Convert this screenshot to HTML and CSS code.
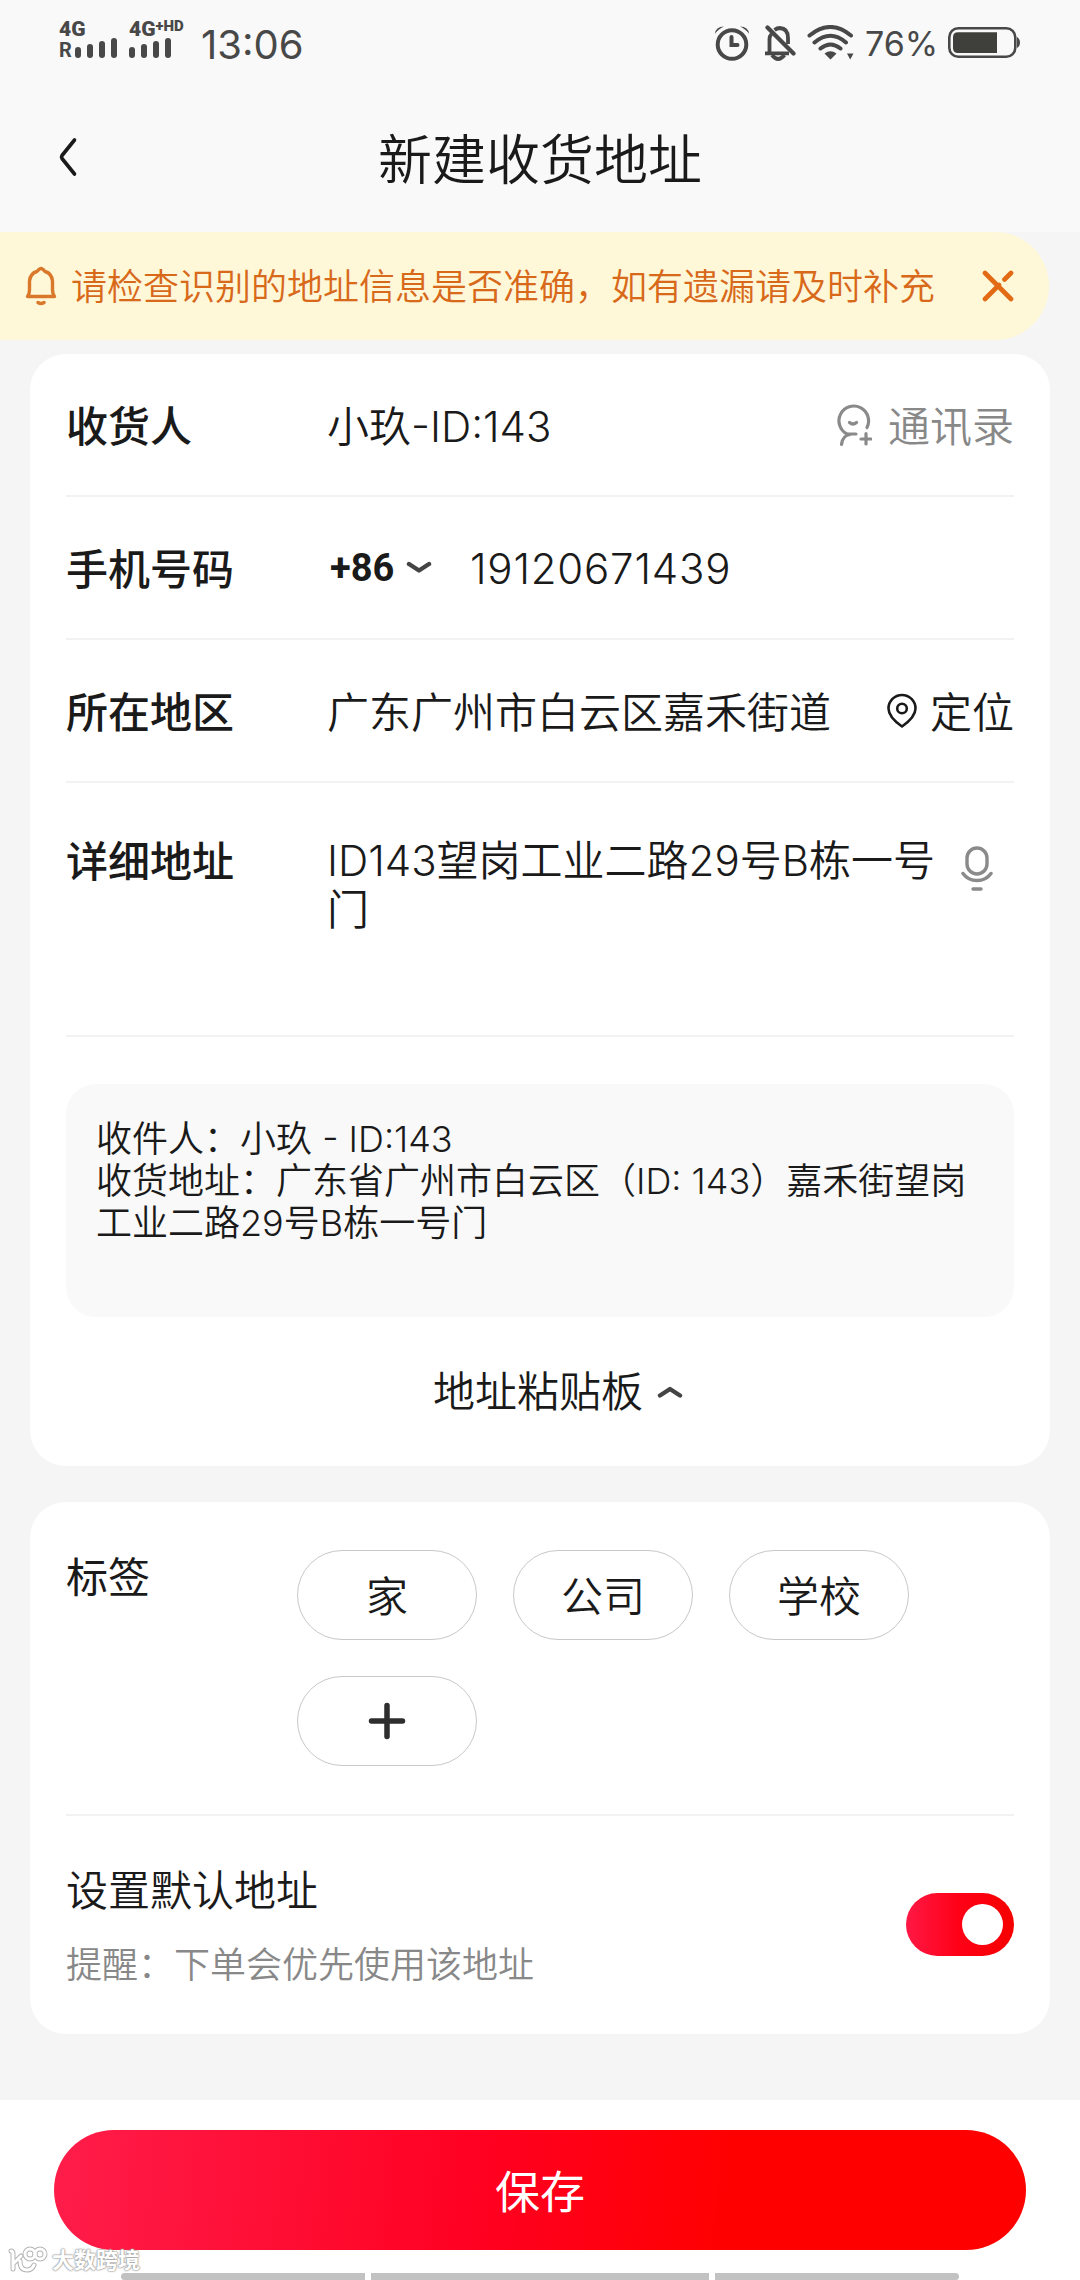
FILE: index.html
```html
<!DOCTYPE html>
<html lang="zh-CN">
<head>
    <meta charset="UTF-8">
    <meta name="viewport" content="width=device-width, initial-scale=1.0">
    <title>新建收货地址</title>
    <link rel="stylesheet" href="styles.css">
</head>
<body>
    <header class="header">
        <div class="status">
            <div class="sim">
                <div class="net">4G</div>
                <div class="signal"><span class="roam">R</span><i class="b1"></i><i class="b2"></i><i class="b3"></i><i class="b4"></i></div>
            </div>
            <div class="sim sim2">
                <div class="net">4G<sup>+HD</sup></div>
                <div class="signal"><i class="b1"></i><i class="b2"></i><i class="b3"></i><i class="b4"></i></div>
            </div>
            <span class="time">13:06</span>
            <div class="status-right">
                <svg class="ic-alarm" width="36" height="36" viewBox="0 0 36 36" fill="none" stroke="#484848" stroke-width="4" stroke-linecap="round">
                    <circle cx="18" cy="19.500" r="14.300"/>
                    <path d="M17.500 12v8h6"/>
                    <path d="M1 9Q1.500 1.500 10 1.500Q4 4 1 9ZM35 9Q34.500 1.500 26 1.500Q32 4 35 9Z" fill="#484848" stroke="none"/>
                </svg>
                <svg class="ic-mute" width="32" height="36" viewBox="0 0 32 36" fill="none" stroke="#484848" stroke-width="3.800">
                    <path d="M5.500 28V14Q5.500 11 7.500 9M10.500 5Q13 3 16 3Q24 3.500 24 13V19M1 28.300H25"/>
                    <path d="M8 30Q14 38 20.500 30"/>
                    <path d="M3.500 2.500L29.500 28.500" stroke-linecap="round" stroke-width="4.200"/>
                </svg>
                <svg class="ic-wifi" width="47" height="36" viewBox="0 0 47 36" fill="none" stroke="#484848" stroke-width="4" stroke-linecap="round">
                    <path d="M2.500 10.500Q23.500-6.500 44 10.500M7.500 17.500Q23.500 4 39 17.500M13.500 23.500Q23.500 15.500 33.500 23.500"/>
                    <path d="M17.500 28.500Q23.500 24 29.500 28.500L23.500 34.500ZM40 28.500H46.500L43.200 34.500Z" fill="#484848" stroke="none"/>
                </svg>
                <span class="percent">76%</span>
                <svg width="72" height="32" viewBox="0 0 72 32">
                    <rect x="1.300" y="1.300" width="66" height="28.400" rx="9" fill="none" stroke="#484848" stroke-width="2.600"/>
                    <path d="M10 5.200H49V26H10Q5 26 5 21V10Q5 5.200 10 5.200Z" fill="#3f3f3b"/>
                    <path d="M69 10Q72 12 72 15.500T69 21Z" fill="#484848"/>
                </svg>
            </div>
        </div>
        <div class="navbar">
            <svg class="back" width="20" height="42" viewBox="0 0 20 42" fill="none" stroke="#1a1a1a" stroke-width="3.600" stroke-linecap="round" stroke-linejoin="round"><path d="M16.500 4L4 19.500Q3 21 4 22.500L16.500 38"/></svg>
            <h1>新建收货地址</h1>
        </div>
    </header>

    <div class="notice">
        <svg class="bell" width="32" height="40" viewBox="0 0 32 40" fill="none" stroke="#d9772a" stroke-width="3.400" stroke-linecap="round" stroke-linejoin="round">
            <path d="M2.500 30.500H29.500Q27.500 28 27.500 24V15Q26.500 7 20 5.500Q17.500 2.500 16 2.500T12 5.500Q5.500 7 4.500 15V24Q4.500 28 2.500 30.500Z"/>
            <path d="M13 36.500Q16 38.500 19 36.500"/>
        </svg>
        <p>请检查识别的地址信息是否准确，如有遗漏请及时补充</p>
        <svg class="close" width="32" height="32" viewBox="0 0 32 32" fill="none" stroke="#e26a14" stroke-width="4.600" stroke-linecap="round"><path d="M3 3L29 29M3 29L17 15M22.500 9.500L29 3"/></svg>
    </div>

    <main>
        <section class="card">
            <div class="row">
                <label>收货人</label>
                <span class="value name">小玖-ID:143</span>
                <a class="action gray">
                    <svg width="36" height="44" viewBox="0 0 36 44" fill="none" stroke="#8a8a8a" stroke-width="3.200" stroke-linecap="round">
                        <path d="M31 24.500A14.800 14.800 0 1 0 11 31H20M5.500 41.500Q6.500 32.500 14 31.500"/>
                        <path d="M13.500 19.500Q17 22.500 20.500 19.500M30 30.500V41M25 36H35"/>
                    </svg>
                    通讯录
                </a>
            </div>
            <div class="row">
                <label>手机号码</label>
                <span class="area-code">+86</span>
                <svg class="down" width="26" height="14" viewBox="0 0 26 14" fill="none" stroke="#444" stroke-width="4.400" stroke-linecap="round" stroke-linejoin="round"><path d="M3 3L13 9.500L23 3"/></svg>
                <span class="phone">19120671439</span>
            </div>
            <div class="row">
                <label>所在地区</label>
                <span class="value">广东广州市白云区嘉禾街道</span>
                <a class="action locate">
                    <svg width="30" height="36" viewBox="0 0 30 36" fill="none" stroke="#1a1a1a" stroke-width="2.600" stroke-linejoin="round">
                        <path d="M15 33.500Q1.500 24 1.500 15.500A13.500 13.500 0 0 1 28.500 15.500Q28.500 24 15 33.500Z"/>
                        <circle cx="15" cy="15.500" r="4.800"/>
                    </svg>
                    定位
                </a>
            </div>
            <div class="row detail">
                <label>详细地址</label>
                <span class="value">ID143望岗工业二路29号B栋一号门</span>
                <svg class="mic" width="32" height="46" viewBox="0 0 32 46" fill="none" stroke="#8a8a8a" stroke-width="3.400" stroke-linecap="round">
                    <rect x="6" y="2" width="20" height="26" rx="10"/>
                    <path d="M2 27.500Q7 34.500 16 34.500T30 27.500M12 43H20"/>
                </svg>
            </div>
            <div class="paste">收件人：小玖 - ID:143<br>收货地址：广东省广州市白云区（ID: 143）嘉禾街望岗<br>工业二路29号B栋一号门</div>
            <div class="board">
                地址粘贴板
                <svg width="26" height="14" viewBox="0 0 26 14" fill="none" stroke="#444" stroke-width="4.400" stroke-linecap="round" stroke-linejoin="round"><path d="M3 10.500L13 4L23 10.500"/></svg>
            </div>
        </section>

        <section class="card">
            <div class="tags">
                <label>标签</label>
                <div class="tag-list">
                    <span class="tag">家</span>
                    <span class="tag">公司</span>
                    <span class="tag">学校</span>
                    <span class="tag add"><svg width="38" height="38" viewBox="0 0 38 38" fill="none" stroke="#2e2e2e" stroke-width="5.500" stroke-linecap="round"><path d="M19 3.500V34.500M3.500 19H34.500"/></svg></span>
                </div>
            </div>
            <div class="default">
                <div class="default-text">
                    <p>设置默认地址</p>
                    <p class="tip">提醒：下单会优先使用该地址</p>
                </div>
                <span class="switch"></span>
            </div>
        </section>
    </main>

    <footer>
        <button class="save">保存</button>
        <div class="gesture"><i></i><i></i><i></i></div>
        <div class="watermark">
            <svg width="40" height="28" viewBox="0 0 40 28" fill="none" stroke-linecap="round">
                <g stroke="#b5b5b5" stroke-width="5">
                    <path d="M3 5Q5 5 5 8V23M13 10L6 17M12 15Q12 24 19 24Q24 24 26 19"/>
                    <circle cx="22" cy="8" r="5"/>
                    <circle cx="32" cy="8" r="5"/>
                </g>
                <g stroke="#fff" stroke-width="3">
                    <path d="M3 5Q5 5 5 8V23M13 10L6 17M12 15Q12 24 19 24Q24 24 26 19"/>
                    <circle cx="22" cy="8" r="5"/>
                    <circle cx="32" cy="8" r="5"/>
                </g>
            </svg>
            <span>大数跨境</span>
        </div>
    </footer>
</body>
</html>
```
FILE: styles.css
```css
@charset "utf-8";
* {
    margin: 0;
    padding: 0;
    box-sizing: border-box;
}
body {
    width: 1080px;
    height: 2280px;
    display: flex;
    flex-direction: column;
    overflow: hidden;
    background: #f5f5f5;
    color: #1a1a1a;
    font-family: Inter, "Noto Sans CJK SC", sans-serif;
    font-size: 42px;
    font-weight: 350;
    line-height: 50px;
}
svg {
    display: block;
    flex-shrink: 0;
}
.header {
    height: 232px;
    background: #f9f9f9;
}

/* status bar */
.status {
    height: 84px;
    display: flex;
    padding: 20px 60px 0 59px;
    color: #484848;
}
.sim {
    width: 70px;
}
.sim2 {
    width: 72px;
}
.net {
    height: 18px;
    font: 900 21px/19px Roboto, sans-serif;
    white-space: nowrap;
}
.net sup {
    font-size: 15px;
    line-height: 0;
    vertical-align: 5px;
}
.signal {
    height: 20px;
    display: flex;
    align-items: flex-end;
    gap: 6px;
}
.signal i {
    width: 6px;
    border-radius: 3px;
    background: #484848;
}
.roam {
    width: 10px;
    font: bold 20px/16px Roboto, sans-serif;
}
.b1 { height: 11px; }
.b2 { height: 14px; }
.b3 { height: 17px; }
.b4 { height: 20px; }
.time {
    font-size: 40px;
    font-weight: 400;
}
.status-right {
    margin-left: auto;
    height: 46px;
    display: flex;
    align-items: center;
}
.ic-mute {
    margin-left: 14px;
}
.ic-wifi {
    margin-left: 11px;
}
.percent {
    width: 70px;
    margin: 1px 13px 0 11px;
    font-size: 34px;
    font-weight: 400;
}

/* title */
.navbar {
    position: relative;
    height: 148px;
    display: flex;
    justify-content: center;
    align-items: center;
}
.navbar h1 {
    padding-top: 5px;
    font-size: 54px;
    font-weight: 350;
    line-height: 74px;
}
.back {
    position: absolute;
    left: 58px;
    top: 52px;
}

.notice {
    width: 1049px;
    height: 108px;
    display: flex;
    align-items: center;
    padding: 0 35px 0 25px;
    border-radius: 0 54px 54px 0;
    background: #fef8d8;
}
.notice p {
    margin-left: 14px;
    padding-top: 1px;
    color: #d8691a;
    font-size: 36px;
    white-space: nowrap;
}
.close {
    margin-left: auto;
}

/* form cards */
main {
    flex: 1;
    padding: 14px 30px 0;
}
.card {
    padding: 0 36px;
    border-radius: 36px;
    background: #fff;
}
.card + .card {
    margin-top: 36px;
}
.row {
    height: 143px;
    display: flex;
    align-items: center;
    padding-top: 4px;
    border-bottom: 2px solid #f2f2f2;
}
.row svg {
    margin-top: -4px;
}
label {
    width: 261px;
    font-weight: 500;
}
.value {
    white-space: nowrap;
}
.name,
.paste {
    font-feature-settings: "case";
}
.action {
    margin-left: auto;
    display: flex;
    align-items: center;
    gap: 16px;
}
.gray {
    color: #888;
}
.locate {
    gap: 13px;
}
.area-code {
    width: 79px;
    margin-top: -3px;
    padding-left: 3px;
    font-family: Roboto, sans-serif;
    font-weight: 700;
    font-size: 38px;
}
.phone {
    margin: -2px 0 0 38px;
    letter-spacing: 0.8px;
}
.detail {
    height: 254px;
    align-items: flex-start;
    padding-top: 54px;
}
.detail .value {
    width: 612px;
    margin-top: -1px;
    line-height: 49px;
    white-space: normal;
}
.detail .mic {
    margin: 9px 0 0 22px;
}
.paste {
    height: 233px;
    margin-top: 47px;
    padding: 34px 30px;
    border-radius: 30px;
    background: #f9f9f9;
    font-size: 36px;
    line-height: 42px;
    white-space: nowrap;
}
.board {
    height: 149px;
    display: flex;
    justify-content: center;
    align-items: center;
    gap: 14px;
    padding-left: 36px;
}

.tags {
    height: 314px;
    display: flex;
    padding-top: 48px;
    border-bottom: 2px solid #f2f2f2;
}
.tags label {
    width: 231px;
    padding-top: 3px;
    font-weight: 400;
}
.tag-list {
    flex: 1;
    display: flex;
    flex-wrap: wrap;
    align-content: flex-start;
    gap: 36px;
}
.tag {
    width: 180px;
    height: 90px;
    display: flex;
    justify-content: center;
    align-items: center;
    padding-top: 4px;
    border: 1px solid #c8c8c8;
    border-radius: 45px;
}
.tag.add {
    padding-top: 0;
}
.default {
    height: 218px;
    display: flex;
    justify-content: space-between;
    align-items: center;
    padding-bottom: 2px;
}
.default-text {
    padding-top: 8px;
}
.tip {
    margin-top: 24px;
    color: #888;
    font-size: 36px;
}
.switch {
    width: 108px;
    height: 63px;
    padding: 11px;
    border-radius: 32px;
    background: linear-gradient(90deg, #ff1845, #ff0016 50%, #f50000);
}
.switch::after {
    content: "";
    display: block;
    width: 41px;
    height: 41px;
    margin-left: auto;
    border-radius: 50%;
    background: #fff;
}

/* bottom bar */
footer {
    position: relative;
    height: 180px;
    display: flex;
    flex-direction: column;
    align-items: center;
    padding-top: 30px;
    background: #fff;
}
.save {
    width: 972px;
    height: 120px;
    padding-bottom: 2px;
    border: none;
    border-radius: 60px;
    background: linear-gradient(95deg, #ff1d4a, #ff0020 45%, #ff0000 70%);
    color: #fff;
    font: 400 45px Inter, "Noto Sans CJK SC", sans-serif;
}
.gesture {
    display: flex;
    gap: 6px;
    margin-top: 23px;
}
.gesture i {
    width: 338px;
    height: 7px;
    background: #c2c2c2;
}
.gesture i:first-child {
    width: 244px;
    border-radius: 4px 0 0 4px;
}
.gesture i:last-child {
    width: 244px;
    border-radius: 0 4px 4px 0;
}
.watermark {
    position: absolute;
    left: 8px;
    top: 145px;
    display: flex;
    align-items: center;
    gap: 4px;
    color: #fff;
    font-size: 22px;
    font-weight: 700;
    line-height: 30px;
    text-shadow: 0 0 2px #999, 0 0 2px #999, 0 0 1px #999;
}
```
